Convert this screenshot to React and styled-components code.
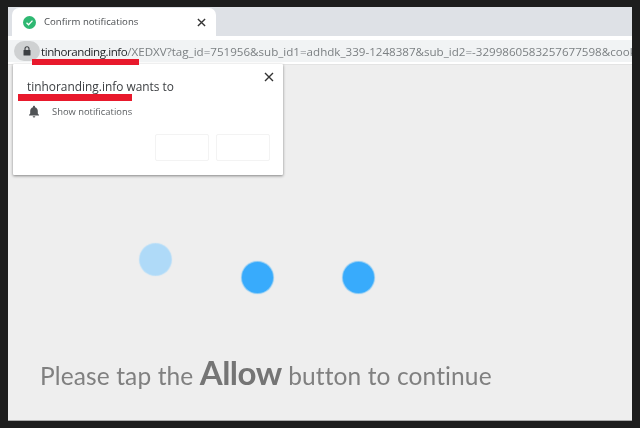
import React from "react";
import styled, { createGlobalStyle } from "styled-components";

const Global = createGlobalStyle`
  html, body { margin: 0; padding: 0; width: 640px; height: 428px; overflow: hidden; background: #1d1d1d; }
  #root { width: 640px; height: 428px; }
`;
const Frame = styled.div`
  width: 640px; height: 428px; box-sizing: border-box;
  padding: 7px 8px 7px 8px; font-family: "Open Sans", sans-serif;
`;
const Browser = styled.div`
  position: relative; height: 100%; display: flex; flex-direction: column;
  background: #eeeeee; overflow: hidden; border-bottom: 1px solid #aaa; box-sizing: border-box;
  filter: blur(0.35px);
`;
const TabBar = styled.div`
  height: 29px; flex: none; background: #dee1e6; padding: 1px 0 0 4px; box-sizing: border-box; display: flex;
`;
const Tab = styled.div`
  width: 204px; height: 28px; background: #fff; border-radius: 7px 7px 0 0;
  display: flex; align-items: center; padding: 0 10px 0 11px; box-sizing: border-box;
  font-size: 9.6px; color: #4a4d50;
`;
const TabTitle = styled.span` flex: 1; margin-left: 8px; margin-bottom: 2px; letter-spacing: .03px; `;
const Toolbar = styled.div`
  height: 29px; flex: none; background: #fff; padding: 4px 0 3px 0; box-sizing: border-box;
  border-bottom: 1px solid #e3e3e3;
`;
const Omnibox = styled.div`
  height: 22px; background: #f1f3f4; display: flex; align-items: center; overflow: hidden;
  white-space: nowrap; font-size: 11.6px; color: #7c8083; padding-left: 6px;
`;
const LockChip = styled.div`
  width: 26px; height: 20px; border-radius: 10px; background: #cfd1d2; flex: none; margin-right: 1px;
  display: flex; align-items: center; justify-content: center;
`;
const Host = styled.span` color: #24272a; letter-spacing: -.45px; `;
const RedBar = styled.div`
  position: absolute; background: #e8192c;
  left: ${p => p.$left}px; top: ${p => p.$top}px; width: ${p => p.$width}px; height: ${p => p.$height}px;
`;
const Popup = styled.div`
  position: absolute; left: 5px; top: 57px; width: 270px; height: 111px; background: #fff;
  box-shadow: 0 1px 3px rgba(0,0,0,.45); border-radius: 1px; box-sizing: border-box;
  padding: 14px 13px 0 14px; color: #3b3e41;
`;
const Close = styled.div` position: absolute; right: 9px; top: 8px; width: 10px; height: 10px; line-height: 0; `;
const PopupTitle = styled.div` font-size: 11.9px; line-height: 17px; `;
const Permission = styled.div`
  display: flex; align-items: center; margin-top: 10px; font-size: 9.4px; color: #5b5e61; padding-left: 1px;
`;
const PermissionText = styled.span` margin-left: 12px; `;
const Buttons = styled.div`
  display: flex; justify-content: flex-end; gap: 7px; margin-top: 16px;
`;
const GhostButton = styled.div`
  width: 54px; height: 27px; border: 1px solid #f3f3f3; border-radius: 2px; box-sizing: border-box; background: #fff;
`;
const Content = styled.div`
  flex: 1; display: flex; flex-direction: column; padding: 0 0 0 32px; min-height: 0;
`;
const Dots = styled.div`
  display: flex; align-items: flex-end; height: 70px; margin-top: 158px; padding-left: 100px; gap: 70.5px;
`;
const Dot = styled.div`
  width: 31px; height: 31px; border-radius: 50%; flex: none;
  background: ${p => p.$faded ? "#afdaf8" : "#38abfc"};
  box-shadow: 0 0 1px 1px ${p => p.$faded ? "#b8def8" : "#7fc6f5"};
  margin-bottom: ${p => p.$raised ? 18 : 0}px;
`;
const Prompt = styled.div`
  margin-top: 62px; font-family: "Lato", "Open Sans", sans-serif; font-size: 24.5px; line-height: 34px;
  color: #808080; white-space: nowrap; letter-spacing: .12px;
`;
const Allow = styled.b` font-size: 33px; font-weight: 700; color: #757575; letter-spacing: -.5px; `;

export default function App() {
  return (
    <>
      <Global />
      <Frame>
        <Browser>
          <TabBar>
            <Tab>
              <svg width="13" height="13" viewBox="0 0 14 14">
                <circle cx="7" cy="7" r="7" fill="#2eb872" />
                <path d="M3.8 7.2l2.2 2.2 4.2-4.4" fill="none" stroke="#fff" strokeWidth="1.4" />
              </svg>
              <TabTitle>Confirm notifications</TabTitle>
              <svg width="9" height="9" viewBox="0 0 10 10">
                <path d="M1 1l8 8M9 1l-8 8" stroke="#333" strokeWidth="1.5" />
              </svg>
            </Tab>
          </TabBar>
          <Toolbar>
            <Omnibox>
              <LockChip>
                <svg width="8" height="10" viewBox="0 0 8 10">
                  <rect x="0.5" y="4" width="7" height="5.6" rx=".6" fill="#3c3f42" />
                  <path d="M2 4.500V2.800a2 2 0 0 1 4 0v1.700" fill="none" stroke="#3c3f42" strokeWidth="1.1" />
                </svg>
              </LockChip>
              <Host>tinhoranding.info</Host>/XEDXV?tag_id=751956&amp;sub_id1=adhdk_339-1248387&amp;sub_id2=-3299860583257677598&amp;cook
            </Omnibox>
          </Toolbar>
          <Content>
            <Dots>
              <Dot $faded $raised />
              <Dot />
              <Dot />
            </Dots>
            <Prompt>Please tap the <Allow>Allow</Allow> button to continue</Prompt>
          </Content>
          <Popup>
            <Close>
              <svg width="10" height="10" viewBox="0 0 10 10">
                <path d="M1 1l8 8M9 1l-8 8" stroke="#333" strokeWidth="1.4" />
              </svg>
            </Close>
            <PopupTitle>tinhoranding.info wants to</PopupTitle>
            <Permission>
              <svg width="12" height="13" viewBox="0 0 12 13">
                <path d="M6 0.800c.6 0 1 .4 1 1v.4c1.800.5 2.800 2 2.800 3.800v2.600L11 10v.6H1V10l1.200-1.400V6c0-1.800 1-3.300 2.800-3.800v-.4c0-.6.400-1 1-1z" fill="#505356" />
                <path d="M4.700 11.300h2.600a1.300 1.300 0 0 1-2.600 0z" fill="#505356" />
              </svg>
              <PermissionText>Show notifications</PermissionText>
            </Permission>
            <Buttons>
              <GhostButton />
              <GhostButton />
            </Buttons>
          </Popup>
          <RedBar $left={24} $top={52} $width={107} $height={6} />
          <RedBar $left={10} $top={87} $width={114} $height={7} />
        </Browser>
      </Frame>
    </>
  );
}
